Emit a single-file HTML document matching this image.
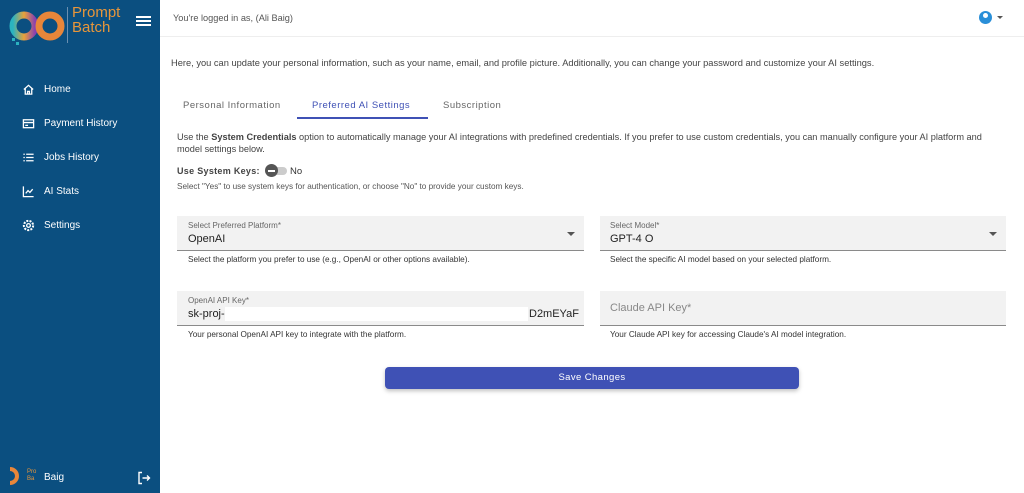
<!DOCTYPE html>
<html><head><style>
*{box-sizing:border-box;margin:0;padding:0}
body{width:1024px;height:493px;overflow:hidden;font-family:"Liberation Sans",sans-serif;background:#fff;position:relative;color:#333}
.sb{position:absolute;left:0;top:0;width:160px;height:493px;background:#0b4f80;color:#fff}
.nav{position:absolute;left:22px;font-size:10px;display:flex;align-items:center}
.nav svg{width:13px;height:13px;margin-right:9px}
.top{position:absolute;left:160px;top:0;right:0;height:37px;background:#fff;border-bottom:1px solid #eee}
.abs{position:absolute}
.fld{position:absolute;background:#f2f2f2;border-bottom:1px solid #8a8a8a}
.lbl{position:absolute;font-size:8px;color:#666}
.val{position:absolute;font-size:11px;color:#222}
.help{position:absolute;font-size:8.2px;color:#333}
.arrow{position:absolute;width:0;height:0;border-left:4px solid transparent;border-right:4px solid transparent;border-top:4px solid #555}
</style></head><body>
<div class="sb">
  <svg class="abs" style="left:8px;top:4px" width="60" height="46" viewBox="0 0 60 46">
    <defs><linearGradient id="g" x1="0" x2="1"><stop offset="0" stop-color="#2bb3c0"/><stop offset=".5" stop-color="#e8a23a"/><stop offset="1" stop-color="#8a3fb0"/></linearGradient></defs>
    <circle cx="16" cy="22" r="11" fill="none" stroke="url(#g)" stroke-width="7"/>
    <circle cx="42" cy="22" r="11" fill="none" stroke="#e8863a" stroke-width="7"/>
    <rect x="4" y="34" width="3" height="3" fill="#2bb3c0"/><rect x="8" y="38" width="3" height="3" fill="#2bb3c0"/>
  </svg>
  <div class="abs" style="left:67px;top:7px;width:1px;height:36px;background:#6a8fb0"></div>
  <div class="abs" style="left:72px;top:5px;font-size:15px;line-height:15px;color:#e8963a">Prompt<br>Batch</div>
  <div class="abs" style="left:136px;top:16px;width:15px;height:2px;background:#fff;box-shadow:0 4px 0 #fff,0 8px 0 #fff"></div>
  <div class="nav" style="top:83px"><svg viewBox="0 0 14 14" fill="none" stroke="#fff" stroke-width="1.4"><path d="M2 7L7 2.5L12 7M3.5 6v6h7V6M6 12V9h2v3"/></svg>Home</div>
  <div class="nav" style="top:117px"><svg viewBox="0 0 14 14" fill="none" stroke="#fff" stroke-width="1.4"><rect x="1.5" y="3" width="11" height="8.5"/><path d="M1.5 6h11M3.5 9h3"/></svg>Payment History</div>
  <div class="nav" style="top:151px"><svg viewBox="0 0 14 14" fill="none" stroke="#fff" stroke-width="1.4"><path d="M1.5 3.5h1.5M4.5 3.5h8M1.5 7h1.5M4.5 7h8M1.5 10.5h1.5M4.5 10.5h8"/></svg>Jobs History</div>
  <div class="nav" style="top:185px"><svg viewBox="0 0 14 14" fill="none" stroke="#fff" stroke-width="1.4"><path d="M1.5 1.5v11h11M4 9l2.5-3 2 2 3-3.5"/></svg>AI Stats</div>
  <div class="nav" style="top:219px"><svg viewBox="0 0 14 14" fill="none" stroke="#fff" stroke-width="1.4"><circle cx="7" cy="7" r="2"/><circle cx="7" cy="7" r="5" stroke-dasharray="2.2 1.3" stroke-width="2.2"/></svg>Settings</div>
  <svg class="abs" style="left:8px;top:467px" width="14" height="18" viewBox="0 0 14 18"><path d="M2 2a7 7 0 1 1 0 14" fill="none" stroke="#e8863a" stroke-width="4"/></svg>
  <div class="abs" style="left:27px;top:469px;font-size:6px;line-height:7px;color:#e8963a">Pro<br>Ba</div>
  <div class="abs" style="left:44px;top:472px;font-size:10px">Baig</div>
  <svg class="abs" style="left:137px;top:471px" width="14" height="14" viewBox="0 0 14 14" fill="none" stroke="#fff" stroke-width="1.4"><path d="M5 1.5H2v11h3M5.5 7h7M10 4.5L12.5 7 10 9.5"/></svg>
</div>
<div class="top">
  <div class="abs" style="left:13px;top:13px;font-size:9.2px;color:#555">You're logged in as, (Ali Baig)</div>
  <div class="abs" style="left:819px;top:11px;width:13px;height:13px;border-radius:50%;background:#2a8fd8"></div>
  <div class="abs" style="left:823px;top:13px;width:5px;height:5px;border-radius:50%;background:#fff"></div>
  <div class="arrow" style="left:837px;top:16px;border-width:3px 3px 0"></div>
</div>
<div class="abs" style="left:171px;top:58px;font-size:9.3px;color:#444;white-space:nowrap">Here, you can update your personal information, such as your name, email, and profile picture. Additionally, you can change your password and customize your AI settings.</div>
<div class="abs" style="left:183px;top:100px;font-size:9.5px;color:#666;letter-spacing:.5px">Personal Information</div>
<div class="abs" style="left:312px;top:100px;font-size:9.5px;color:#3f51b5;letter-spacing:.5px">Preferred AI Settings</div>
<div class="abs" style="left:443px;top:100px;font-size:9.5px;color:#666;letter-spacing:.5px">Subscription</div>
<div class="abs" style="left:297px;top:117px;width:131px;height:2px;background:#3f51b5"></div>
<div class="abs" style="left:177px;top:131px;width:830px;font-size:9.2px;line-height:12px;color:#444">Use the <b>System Credentials</b> option to automatically manage your AI integrations with predefined credentials. If you prefer to use custom credentials, you can manually configure your AI platform and model settings below.</div>
<div class="abs" style="left:177px;top:166px;font-size:9px;font-weight:bold;color:#444;letter-spacing:.3px">Use System Keys:</div>
<div class="abs" style="left:266px;top:167px;width:21px;height:8px;border-radius:4px;background:#ccc"></div>
<div class="abs" style="left:265px;top:164px;width:13px;height:13px;border-radius:50%;background:#555"></div>
<div class="abs" style="left:268px;top:170px;width:7px;height:1.5px;background:#fff"></div>
<div class="abs" style="left:290px;top:166px;font-size:9.5px;color:#333">No</div>
<div class="abs" style="left:177px;top:182px;font-size:8.2px;color:#555;white-space:nowrap">Select "Yes" to use system keys for authentication, or choose "No" to provide your custom keys.</div>

<div class="fld" style="left:177px;top:216px;width:407px;height:35px"></div>
<div class="lbl" style="left:188px;top:221px">Select Preferred Platform*</div>
<div class="val" style="left:188px;top:233px">OpenAI</div>
<div class="arrow" style="left:567px;top:232px"></div>
<div class="help" style="left:188px;top:255px">Select the platform you prefer to use (e.g., OpenAI or other options available).</div>

<div class="fld" style="left:600px;top:216px;width:406px;height:35px"></div>
<div class="lbl" style="left:610px;top:221px">Select Model*</div>
<div class="val" style="left:610px;top:233px">GPT-4 O</div>
<div class="arrow" style="left:989px;top:232px"></div>
<div class="help" style="left:610px;top:255px">Select the specific AI model based on your selected platform.</div>

<div class="fld" style="left:177px;top:291px;width:407px;height:35px"></div>
<div class="lbl" style="left:188px;top:296px">OpenAI API Key*</div>
<div class="abs" style="left:225px;top:307px;width:303px;height:14px;background:#fff"></div>
<div class="val" style="left:188px;top:308px">sk-proj-</div>
<div class="val" style="left:529px;top:308px;width:50px;overflow:hidden;white-space:nowrap">D2mEYaF</div>
<div class="help" style="left:188px;top:330px">Your personal OpenAI API key to integrate with the platform.</div>

<div class="fld" style="left:600px;top:291px;width:406px;height:35px"></div>
<div class="abs" style="left:610px;top:302px;font-size:11px;color:#888">Claude API Key*</div>
<div class="help" style="left:610px;top:330px">Your Claude API key for accessing Claude's AI model integration.</div>

<div class="abs" style="left:385px;top:367px;width:414px;height:22px;border-radius:4px;background:#3f51b5;box-shadow:0 2px 4px rgba(0,0,0,.25);color:#fff;font-size:9.5px;text-align:center;line-height:22px;letter-spacing:.4px">Save Changes</div>
</body></html>
